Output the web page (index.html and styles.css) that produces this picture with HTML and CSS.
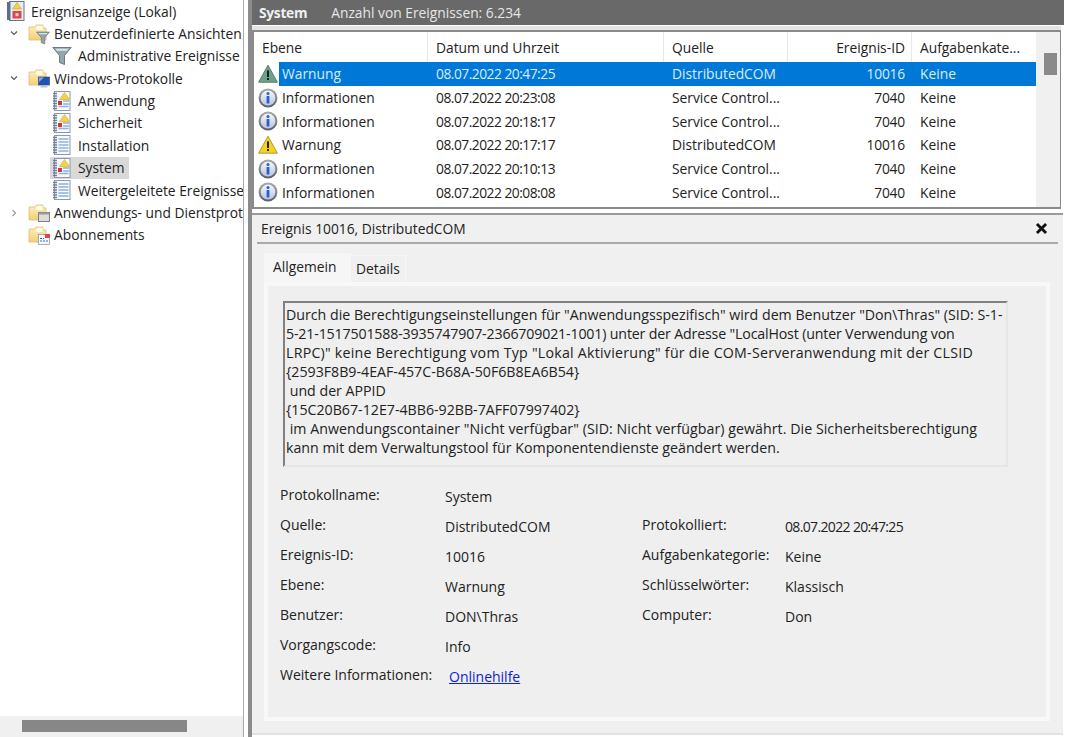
FILE: index.html
```html
<!DOCTYPE html>
<html lang="de">
<head>
<meta charset="utf-8">
<title>Ereignisanzeige</title>
<link rel="stylesheet" href="styles.css">
</head>
<body>
<svg class="defs" width="0" height="0" aria-hidden="true">
  <defs>
    <linearGradient id="infoFill" x1="0" y1="0" x2="0" y2="1"><stop offset="0" stop-color="#f4f6fb"/><stop offset="1" stop-color="#b9c6e6"/></linearGradient>
    <linearGradient id="ringFill" x1="0" y1="0" x2="0" y2="1"><stop offset="0" stop-color="#a8a8a8"/><stop offset="1" stop-color="#5d5d66"/></linearGradient>
    <linearGradient id="folderFill" x1="0" y1="0" x2="0" y2="1"><stop offset="0" stop-color="#fdf0bd"/><stop offset="1" stop-color="#f3cf78"/></linearGradient>
    <symbol id="info" viewBox="0 0 20 20">
      <circle cx="10" cy="10" r="9.4" fill="url(#ringFill)"/>
      <circle cx="10" cy="10" r="7.4" fill="url(#infoFill)"/>
      <circle cx="10" cy="5.6" r="1.5" fill="#2a5fc4"/>
      <rect x="8.6" y="8" width="2.8" height="7.4" rx=".5" fill="#2a5fc4"/>
    </symbol>
    <symbol id="warn" viewBox="0 0 20 20">
      <path d="M10 1.2 19.4 18.2H.6Z" fill="#f5d21f" stroke="#b49a2c" stroke-width="1" stroke-linejoin="round"/>
      <rect x="9" y="6.4" width="2" height="6.6" fill="#222"/><rect x="9" y="14" width="2" height="2" fill="#222"/>
    </symbol>
    <symbol id="warnsel" viewBox="0 0 20 20">
      <path d="M10 1.2 19.4 18.2H.6Z" fill="#6fa08b" stroke="#54806f" stroke-width="1" stroke-linejoin="round"/>
      <rect x="9" y="6.4" width="2" height="6.6" fill="#10241d"/><rect x="9" y="14" width="2" height="2" fill="#10241d"/>
    </symbol>
    <symbol id="log" viewBox="0 0 20 20">
      <rect x="2.500" y=".5" width="15.500" height="19" fill="#f7f9fd" stroke="#8a99ad"/>
      <path d="M1 2.500h4M1 5h4M1 7.500h4M1 10h4M1 12.500h4M1 15h4M1 17.500h4" stroke="#6f7f96" stroke-width="1.300"/>
      <path d="M6.500 4h10M6.500 7h10M6.500 10h10M6.500 13h10M6.500 16h10" stroke="#8db2dc" stroke-width="1.300"/>
    </symbol>
    <symbol id="logalert" viewBox="0 0 20 20">
      <rect x="2.500" y=".5" width="15.500" height="19" fill="#f7f9fd" stroke="#8a99ad"/>
      <path d="M1 2.500h4M1 5h4M1 7.500h4M1 10h4M1 12.500h4M1 15h4M1 17.500h4" stroke="#6f7f96" stroke-width="1.300"/>
      <path d="M11 10h6M6.500 15.500h10M11 13h6" stroke="#8db2dc" stroke-width="1.300"/>
      <path d="M12.500 1.500 17.500 8.500H7.500Z" fill="#f6d23c" stroke="#d3ab2d" stroke-width=".6"/>
      <rect x="6" y="10" width="4" height="4" fill="#cf3438"/>
    </symbol>
    <symbol id="rootlog" viewBox="0 0 20 20">
      <rect x="3.500" y=".5" width="14.500" height="19" fill="#e8ecf4" stroke="#66758f"/>
      <rect x="1" y="1" width="3.500" height="18" fill="#5d6f8c"/>
      <path d="M11 1.500 15.500 8H6.500Z" fill="#f6d23c" stroke="#c9a12e" stroke-width=".6"/>
      <rect x="6.500" y="10" width="9" height="7.500" fill="#d84a4a"/>
      <rect x="9.500" y="12.200" width="3" height="3" fill="#f5d0d0"/>
    </symbol>
    <symbol id="folder" viewBox="0 0 20 20">
      <path d="M1 4h6l1-2h7v3h3v12H1Z" fill="url(#folderFill)" stroke="#dcbf7a" stroke-width=".8"/>
      <rect x="8.500" y="3" width="6" height="4" fill="#fffbe8"/>
    </symbol>
    <symbol id="funnel" viewBox="0 0 20 20">
      <path d="M.8 1.500h18.400L12.500 9.500v9l-5-2V9.500Z" fill="#8fa7ad" stroke="#5f7278" stroke-width=".9"/>
      <path d="M3.500 2.800h13L15 4.800H5Z" fill="#dbe5e8"/>
    </symbol>
    <symbol id="monitor" viewBox="0 0 12 12">
      <rect x=".5" y="1" width="11" height="8" fill="#1d54b8" stroke="#3d4f73" stroke-width=".7"/>
      <path d="M1 1.500h5L1 6Z" fill="#7fa7e8"/>
      <rect x="2.500" y="9.500" width="7" height="2" fill="#bcc4ce"/>
    </symbol>
    <symbol id="window" viewBox="0 0 12 12">
      <rect x=".5" y="1.500" width="11" height="9" fill="#dcdcdc" stroke="#7f7f7f"/>
      <rect x=".5" y="1.500" width="11" height="2" fill="#9b9b9b"/>
    </symbol>
    <symbol id="calendar" viewBox="0 0 12 12">
      <rect x=".5" y="1.500" width="11" height="10" fill="#f5f7fb" stroke="#8291a8" stroke-width=".7"/>
      <rect x="7" y="1" width="5" height="4" fill="#d84a4a"/>
      <path d="M2 5.500h2M5 5.500h1M2 8h2M5 8h2M8 8h2" stroke="#2f6ed0" stroke-width="1"/>
    </symbol>
  </defs>
</svg>

<div class="app">
  <aside class="nav">
    <ul class="tree">
      <li class="node root"><span class="icon20 rooticon"><svg><use href="#rootlog"/></svg></span><span>Ereignisanzeige (Lokal)</span></li>
      <li class="node l1"><svg class="chev" viewBox="0 0 8 8"><path d="M1 2.500 4 5.500 7 2.500"/></svg><span class="icon20 stack"><svg><use href="#folder"/></svg><svg class="badge badge-funnel"><use href="#funnel"/></svg></span><span>Benutzerdefinierte Ansichten</span></li>
      <li class="node l2"><span class="icon20"><svg><use href="#funnel"/></svg></span><span>Administrative Ereignisse</span></li>
      <li class="node l1"><svg class="chev" viewBox="0 0 8 8"><path d="M1 2.500 4 5.500 7 2.500"/></svg><span class="icon20 stack"><svg><use href="#folder"/></svg><svg class="badge"><use href="#monitor"/></svg></span><span>Windows-Protokolle</span></li>
      <li class="node l2"><span class="icon20"><svg><use href="#logalert"/></svg></span><span>Anwendung</span></li>
      <li class="node l2"><span class="icon20"><svg><use href="#logalert"/></svg></span><span>Sicherheit</span></li>
      <li class="node l2"><span class="icon20"><svg><use href="#log"/></svg></span><span>Installation</span></li>
      <li class="node l2 current"><span class="icon20"><svg><use href="#logalert"/></svg></span><span>System</span></li>
      <li class="node l2"><span class="icon20"><svg><use href="#log"/></svg></span><span>Weitergeleitete Ereignisse</span></li>
      <li class="node l1"><svg class="chev closed" viewBox="0 0 8 8"><path d="M2.500 1 5.500 4 2.500 7"/></svg><span class="icon20 stack"><svg><use href="#folder"/></svg><svg class="badge"><use href="#window"/></svg></span><span>Anwendungs- und Dienstprotokolle</span></li>
      <li class="node l1 nochev"><span class="icon20 stack"><svg><use href="#folder"/></svg><svg class="badge"><use href="#calendar"/></svg></span><span>Abonnements</span></li>
    </ul>
    <div class="hscroll"><div class="hthumb"></div></div>
  </aside>

  <main class="content">
    <header class="titlebar"><strong>System</strong><span>Anzahl von Ereignissen: 6.234</span></header>

    <section class="listbox">
      <div class="listmain">
        <div class="thead">
          <div class="th">Ebene</div>
          <div class="th">Datum und Uhrzeit</div>
          <div class="th">Quelle</div>
          <div class="th num">Ereignis-ID</div>
          <div class="th last">Aufgabenkate...</div>
        </div>
        <div class="row selected"><span class="rowicon"><svg><use href="#warnsel"/></svg></span><span class="c lvl">Warnung</span><span class="c date">08.07.2022 20:47:25</span><span class="c">DistributedCOM</span><span class="c num">10016</span><span class="c">Keine</span></div>
        <div class="row"><span class="rowicon"><svg><use href="#info"/></svg></span><span class="c lvl">Informationen</span><span class="c date">08.07.2022 20:23:08</span><span class="c">Service Control...</span><span class="c num">7040</span><span class="c">Keine</span></div>
        <div class="row"><span class="rowicon"><svg><use href="#info"/></svg></span><span class="c lvl">Informationen</span><span class="c date">08.07.2022 20:18:17</span><span class="c">Service Control...</span><span class="c num">7040</span><span class="c">Keine</span></div>
        <div class="row"><span class="rowicon"><svg><use href="#warn"/></svg></span><span class="c lvl">Warnung</span><span class="c date">08.07.2022 20:17:17</span><span class="c">DistributedCOM</span><span class="c num">10016</span><span class="c">Keine</span></div>
        <div class="row"><span class="rowicon"><svg><use href="#info"/></svg></span><span class="c lvl">Informationen</span><span class="c date">08.07.2022 20:10:13</span><span class="c">Service Control...</span><span class="c num">7040</span><span class="c">Keine</span></div>
        <div class="row"><span class="rowicon"><svg><use href="#info"/></svg></span><span class="c lvl">Informationen</span><span class="c date">08.07.2022 20:08:08</span><span class="c">Service Control...</span><span class="c num">7040</span><span class="c">Keine</span></div>
      </div>
      <div class="vscroll"><div class="vthumb"></div></div>
    </section>

    <section class="detail">
      <div class="detailhead"><span>Ereignis 10016, DistributedCOM</span><svg class="close" viewBox="0 0 10 10"><path d="M1.500 1.500 8.500 8.500M8.500 1.500 1.500 8.500"/></svg></div>
      <div class="tabs"><div class="tab active">Allgemein</div><div class="tab">Details</div></div>
      <div class="panel">
        <div class="message">
          <div>Durch die Berechtigungseinstellungen für "Anwendungsspezifisch" wird dem Benutzer "Don\Thras" (SID: S-1-</div>
          <div class="tighter">5-21-1517501588-3935747907-2366709021-1001) unter der Adresse "LocalHost (unter Verwendung von</div>
          <div class="wider">LRPC)" keine Berechtigung vom Typ "Lokal Aktivierung" für die COM-Serveranwendung mit der CLSID</div>
          <div>{2593F8B9-4EAF-457C-B68A-50F6B8EA6B54}</div>
          <div>&nbsp;und der APPID</div>
          <div>{15C20B67-12E7-4BB6-92BB-7AFF07997402}</div>
          <div class="wide">&nbsp;im Anwendungscontainer "Nicht verfügbar" (SID: Nicht verfügbar) gewährt. Die Sicherheitsberechtigung</div>
          <div>kann mit dem Verwaltungstool für Komponentendienste geändert werden.</div>
        </div>
        <div class="fields">
          <span class="k">Protokollname:</span><span class="v">System</span><span></span><span></span>
          <span class="k">Quelle:</span><span class="v">DistributedCOM</span><span class="k">Protokolliert:</span><span class="v date">08.07.2022 20:47:25</span>
          <span class="k">Ereignis-ID:</span><span class="v">10016</span><span class="k">Aufgabenkategorie:</span><span class="v">Keine</span>
          <span class="k">Ebene:</span><span class="v">Warnung</span><span class="k">Schlüsselwörter:</span><span class="v">Klassisch</span>
          <span class="k">Benutzer:</span><span class="v">DON\Thras</span><span class="k">Computer:</span><span class="v">Don</span>
          <span class="k">Vorgangscode:</span><span class="v">Info</span><span></span><span></span>
          <span class="k">Weitere Informationen:</span><span class="v"><a class="link" href="#">Onlinehilfe</a></span><span></span><span></span>
        </div>
      </div>
    </section>
  </main>
</div>
</body>
</html>
```
FILE: styles.css
```css
* { box-sizing: border-box; }
html, body { margin: 0; padding: 0; background: #fff; }
body { font-family: "Open Sans", "Noto Sans", sans-serif; font-size: 13.8px; color: #222; overflow: hidden; }
.defs { display: block; height: 0; }

.app { display: flex; width: 1064px; height: 737px; overflow: hidden; }

/* navigation tree */
.nav { width: 244px; flex: none; height: 737px; display: flex; flex-direction: column; border-right: 1px solid #a9a9a9; margin-right: 4px; }
.tree { list-style: none; margin: -0.2px 0 0; padding: 0; flex: 1; overflow: hidden; width: 243px; }
.node { height: 22.4px; display: flex; align-items: center; white-space: nowrap; overflow: hidden; }
.node.root { padding-left: 6px; gap: 5px; }
.node.l1 { padding-left: 10px; }
.node.nochev { padding-left: 28px; }
.node.l2 { padding-left: 52px; gap: 6px; }
.node.l1 .icon20 { margin-right: 6px; }
.node.l1 .chev { margin-right: 10px; }
.node.current { background: linear-gradient(#d9d9d9, #d9d9d9) no-repeat 50px 0 / 79px 100%; }
.chev { width: 8px; height: 8px; flex: none; fill: none; stroke: #555; stroke-width: 1.100; }
.chev.closed { stroke: #999; }
.icon20 { width: 20px; height: 20px; flex: none; display: block; position: relative; }
.icon20 svg { width: 20px; height: 20px; display: block; }
.icon20 .badge { position: absolute; right: -2px; bottom: 0; width: 12px; height: 12px; }
.icon20 .badge-funnel { width: 14px; height: 14px; bottom: -2px; }
.hscroll { height: 21px; width: 243px; background: #f0f0f0; padding: 4px 0 0 22px; flex: none; }
.hthumb { width: 165px; height: 12px; background: #878787; }

/* right column */
.content { width: 816px; flex: none; height: 737px; display: flex; flex-direction: column; border-left: 4px solid #8c8c8c; }
.titlebar { height: 25px; flex: none; background: #696969; color: #e6e6e6; display: flex; align-items: center; gap: 24px; padding-left: 7px; border-bottom: 1px solid #696969; }
.titlebar strong { font-weight: 700; color: #f0f0f0; letter-spacing: -0.3px; }

.listbox { flex: none; height: 179px; margin: 5px 3px 0 0; border-top: 2px solid #8a8a8a; border-left: 2px solid #8a8a8a; border-right: 1px solid #8a8a8a; border-bottom: 2px solid #8a8a8a; box-shadow: 0 -4px 0 #e4e4e4; display: flex; overflow: hidden; background: #fff; }
.listmain { width: 782px; flex: none; overflow: hidden; }
.thead { display: grid; grid-template-columns: 174px 236px 124px 124px 124px; height: 30px; align-items: center; }
.th { padding-left: 8px; height: 100%; display: flex; align-items: center; border-right: 1px solid #e8e8e8; }
.th.num { justify-content: flex-end; padding-right: 6px; }
.th.last { border-right: 0; }
.row { display: grid; grid-template-columns: 25px 149px 236px 124px 124px 124px; height: 23.7px; align-items: center; white-space: nowrap; }
.rowicon { width: 24px; height: 22px; padding: 1px 0 0 4px; display: block; }
.rowicon svg { width: 20px; height: 20px; display: block; }
.c { padding-left: 8px; height: 100%; display: flex; align-items: center; }
.c.lvl { padding-left: 3px; }
.c.num { justify-content: flex-end; padding-right: 7px; letter-spacing: -0.2px; }
.date { letter-spacing: -0.5px; }
.row.selected .c { background: #0078d7; color: #d9ecfb; }
.vscroll { flex: 1; background: #f0f0f0; padding: 21px 3px 0 8px; }
.vthumb { height: 22px; background: #8a8a8a; }

/* detail pane */
.detail { flex: 1; margin: 4px 1px 2px 0; background: #f0f0f0; border-top: 2px solid #9a9a9a; border-bottom: 2px solid #e2e2e2; padding: 0 0 12px; display: flex; flex-direction: column; min-height: 0; }
.detailhead { flex: none; height: 29px; margin: 0 5px; padding: 0 10px 0 4px; display: flex; align-items: center; justify-content: space-between; border-bottom: 2px solid #a9a9a9; }
.close { width: 13px; height: 13px; fill: none; stroke: #111; stroke-width: 2.200; }
.tabs { flex: none; display: flex; align-items: flex-end; height: 38px; padding-left: 12px; }
.tab { height: 27px; width: 55px; padding: 0 0 2px 5px; display: flex; align-items: center; border-top: 1px solid #f6f6f6; border-right: 1px solid #f6f6f6; }
.tab.active { height: 29px; width: 87px; background: #f6f6f6; padding: 0 9px 3px; }
.panel { flex: 1; min-height: 0; margin: 0 13px 0 12px; border: 4px solid #f8f8f8; background: #efefef; padding: 15px 12px 0 15px; font-size: 14px; }
.message { width: 725px; height: 166px; border-top: 2px solid #808080; border-left: 2px solid #808080; border-right: 2px solid #e6e6e6; border-bottom: 2px solid #e6e6e6; padding: 2px 0 0 1px; font-size: 14.2px; line-height: 19px; white-space: nowrap; background: #efefef; }
.tighter { letter-spacing: -0.16px; }
.wide { letter-spacing: 0.05px; }
.wider { letter-spacing: 0.24px; }
.fields { display: grid; grid-template-columns: 165px 197px 143px 1fr; grid-auto-rows: 30px; margin: 13px 0 0 -3px; align-items: center; }
.fields .date { letter-spacing: -0.65px; }
.k { position: relative; top: -1px; }
.v { position: relative; top: 1px; }
.link { color: #0b22dd; text-decoration: underline; padding-left: 4px; }
```
